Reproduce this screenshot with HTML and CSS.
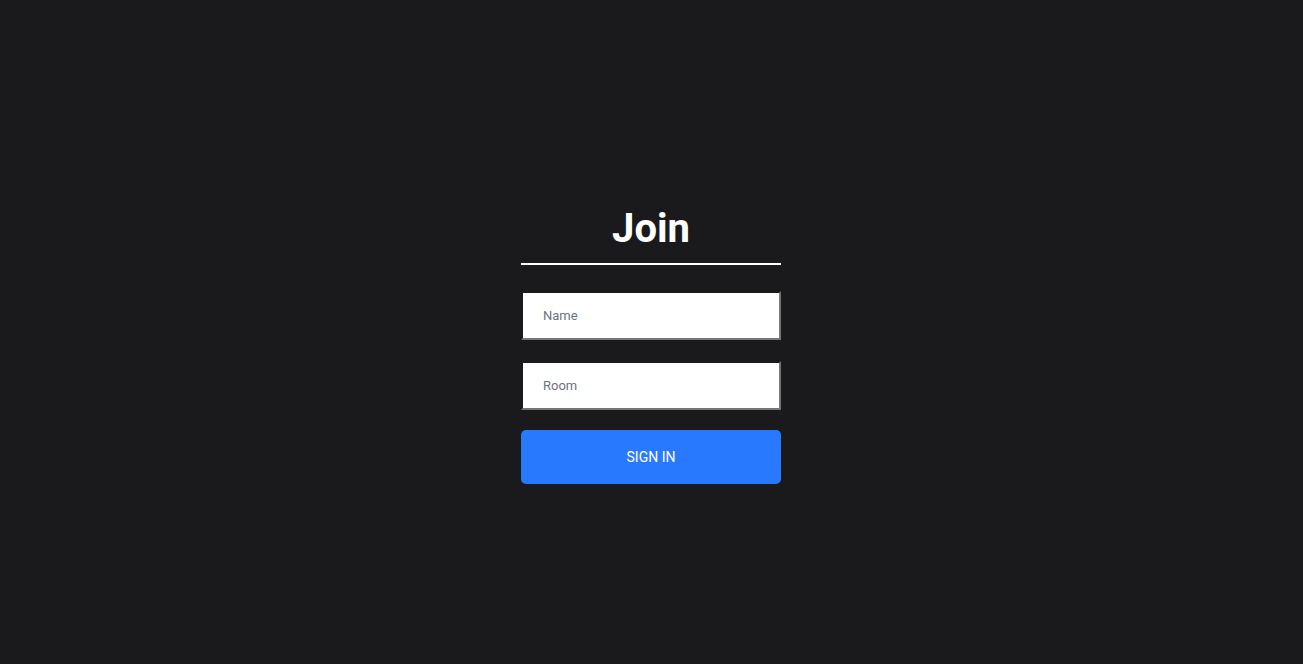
FILE: index.html
```html
<!DOCTYPE html>
<html lang="en">
<head>
    <meta charset="UTF-8">
    <title>Join</title>
    <link rel="stylesheet" href="styles.css">
</head>
<body>
    <div class="outer">
        <div class="join">
            <h1 class="heading">Join</h1>
            <input class="join-input" type="text" placeholder="Name">
            <input class="join-input" type="text" placeholder="Room">
            <button class="sign-btn" type="submit">SIGN IN</button>
        </div>
    </div>
</body>
</html>
```

FILE: styles.css
```css
* {
    box-sizing: border-box;
}
html, body {
    margin: 0;
    padding: 0;
    height: 100%;
}
body {
    font-family: Roboto, "Liberation Sans", sans-serif;
    background-color: #1a1a1d;
}
.outer {
    display: flex;
    justify-content: center;
    align-items: center;
    height: 100vh;
    padding-right: 1px;
}
.join {
    width: 260px;
    display: flex;
    flex-direction: column;
    margin-top: 25px;
}
.heading {
    color: #fff;
    font-size: 40px;
    font-weight: 700;
    text-align: center;
    margin: 0 0 26px;
    padding-bottom: 10px;
    border-bottom: 2px solid #fff;
    line-height: 48px;
}
.join-input {
    width: 260px;
    height: 49px;
    padding: 0 20px;
    font-family: Roboto, "Liberation Sans", sans-serif;
    font-size: 13px;
    border: 2px solid #767676;
    border-top-color: #1a1a1d;
    border-left-color: #1a1a1d;
    background: #fff;
    margin-bottom: 21px;
    outline: none;
}
.join-input::placeholder {
    color: #6b7280;
}
.sign-btn {
    width: 260px;
    height: 54px;
    margin-top: -1px;
    background-color: #2979ff;
    color: #fff;
    border: none;
    border-radius: 5px;
    font-family: Roboto, "Liberation Sans", sans-serif;
    font-size: 14px;
    text-transform: uppercase;
    cursor: pointer;
}
```
